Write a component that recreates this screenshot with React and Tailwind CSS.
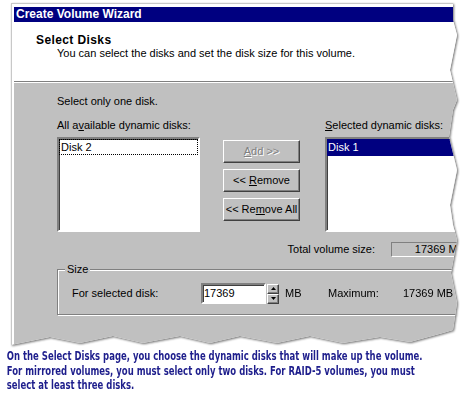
import React from 'react';

const raised =
  'border border-t-white border-l-white border-r-[#404040] border-b-[#404040] shadow-[inset_-1px_-1px_0_#808080] bg-[#c0c0c0]';
const sunken =
  'border-2 border-t-[#808080] border-l-[#808080] border-r-white border-b-white shadow-[inset_1px_1px_0_#404040] bg-white';

const WinButton = ({ children, disabled }) => (
  <div
    className={`${raised} h-[23px] w-[77px] flex items-center justify-center text-[11px] ${
      disabled ? 'text-[#808080] [text-shadow:1px_1px_0_#fff]' : 'text-black'
    }`}
  >
    <span className="whitespace-pre">{children}</span>
  </div>
);

const Spinner = () => (
  <div className="flex flex-col w-[12px] h-[20px]">
    <div className={`${raised} h-[10px] flex items-center justify-center`}>
      <svg width="5" height="3" viewBox="0 0 5 3">
        <path d="M2.5 0 L5 3 L0 3 Z" fill="#000" />
      </svg>
    </div>
    <div className={`${raised} h-[10px] flex items-center justify-center`}>
      <svg width="5" height="3" viewBox="0 0 5 3">
        <path d="M0 0 L5 0 L2.5 3 Z" fill="#000" />
      </svg>
    </div>
  </div>
);

export default function App() {
  return (
    <div className="w-[470px] h-[397px] bg-white overflow-hidden font-['Liberation_Sans',Arial,sans-serif]">
      <div className="pl-[11px] pt-[3px] [filter:drop-shadow(1px_1px_1px_rgba(0,0,0,0.55))]">
        <div className="w-[459px] h-[343px] bg-white border-l border-t border-[#c8c8c8] pl-[2px] pt-[3px] flex flex-col [clip-path:polygon(0_0,442px_0,442px_17px,446px_32px,439px_67px,446px_97px,442px_107px,438px_134px,446px_167px,439px_202px,442px_222px,446px_237px,440px_270px,446px_300px,442px_327px,432px_330px,399px_339px,369px_334px,332px_340px,299px_333px,266px_340px,229px_333px,199px_340px,169px_333px,132px_340px,102px_333px,69px_340px,39px_334px,0_342px)]">
          {/* title bar */}
          <div className="h-[15px] bg-[#000080] text-white text-[12px] font-bold leading-[15px] pl-[2px]">
            Create Volume Wizard
          </div>

          {/* header */}
          <div className="h-[60px] bg-white border-b border-[#808080] pl-[22px] pt-[12px] text-[11px] leading-[13px] text-black">
            <div className="font-bold text-[12px] tracking-[0.4px]">Select Disks</div>
            <div className="pl-[21px]">You can select the disks and set the disk size for this volume.</div>
          </div>

          {/* body */}
          <div className="flex-1 bg-[#c0c0c0] border-t border-white pl-[43px] pt-[12px] text-[11px] leading-[13px] text-black">
            <div>Select only one disk.</div>

            <div className="flex mt-[11px]">
              <div className="w-[143px] flex flex-col">
                <div>
                  All a<span className="underline">v</span>ailable dynamic disks:
                </div>
                <div className={`${sunken} h-[95px] mt-[5px] p-0`}>
                  <div className="h-[16px] border border-dotted border-black leading-[14px] pl-[1px]">Disk 2</div>
                </div>
              </div>

              <div className="ml-[23px] mt-[21px] flex flex-col gap-[6px]">
                <WinButton disabled>
                  <span className="underline">A</span>dd &gt;&gt;
                </WinButton>
                <WinButton>
                  {'<< '}
                  <span className="underline">R</span>emove
                </WinButton>
                <WinButton>
                  {'<< Re'}
                  <span className="underline">m</span>ove All
                </WinButton>
              </div>

              <div className="ml-[25px] flex-1 flex flex-col">
                <div>
                  <span className="underline">S</span>elected dynamic disks:
                </div>
                <div className={`${sunken} h-[95px] mt-[5px]`}>
                  <div className="h-[17px] bg-[#000080] text-white leading-[17px] pl-[1px]">Disk 1</div>
                </div>
              </div>
            </div>

            <div className="flex justify-end items-center mt-[10px]">
              <span>Total volume size:</span>
              <div className="ml-[16px] w-[79px] h-[15px] border border-t-[#808080] border-l-[#808080] border-r-white border-b-white flex items-center justify-end pr-[4px]">
                17369 MB
              </div>
            </div>

            <fieldset className="mt-[6px] border border-[#808080] shadow-[1px_1px_0_#fff,inset_1px_1px_0_#fff] pb-[10px]">
              <legend className="ml-[7px] px-[2px] bg-[#c0c0c0] leading-[13px]">Size</legend>
              <div className="flex items-center mt-[7px] pl-[14px]">
                <span className="w-[129px]">For selected disk:</span>
                <div className={`${sunken} w-[65px] h-[21px] flex items-center pl-[1px]`}>17369</div>
                <div className="ml-[1px]">
                  <Spinner />
                </div>
                <span className="ml-[6px] w-[43px]">MB</span>
                <span className="w-[75px]">Maximum:</span>
                <span>17369 MB</span>
              </div>
            </fieldset>
          </div>
        </div>
      </div>

      <div className="mt-[3px] pl-[9px] text-[12.5px] leading-[14.5px] font-bold text-[#1e1e8c] whitespace-nowrap font-['DejaVu_Sans_Condensed','DejaVu_Sans',sans-serif] origin-left scale-x-[0.755]">
        On the Select Disks page, you choose the dynamic disks that will make up the volume.
        <br />
        For mirrored volumes, you must select only two disks. For RAID-5 volumes, you must
        <br />
        select at least three disks.
      </div>
    </div>
  );
}
